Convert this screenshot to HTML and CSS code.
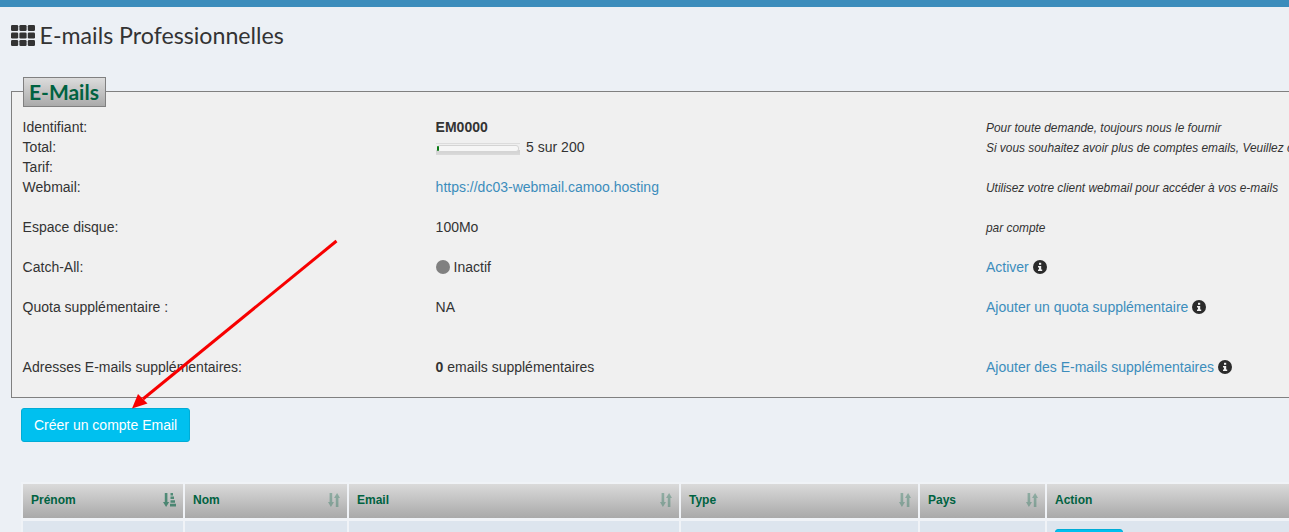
FILE: index.html
```html
<!DOCTYPE html>
<html>
<head>
    <title>E-mails Professionnelles</title>
    <meta name="viewport" content="width=device-width, initial-scale=1">
    <link rel="stylesheet" href="styles.css">
</head>
<body>
    <div class="top-bar"></div>

    <div class="page-title">
        <svg class="title-icon" width="24" height="21" viewBox="0 0 24 21">
            <rect x="0" y="0" width="7.200" height="6" rx="1.200"/>
            <rect x="8.400" y="0" width="7.200" height="6" rx="1.200"/>
            <rect x="16.800" y="0" width="7.200" height="6" rx="1.200"/>
            <rect x="0" y="7.500" width="7.200" height="6" rx="1.200"/>
            <rect x="8.400" y="7.500" width="7.200" height="6" rx="1.200"/>
            <rect x="16.800" y="7.500" width="7.200" height="6" rx="1.200"/>
            <rect x="0" y="15" width="7.200" height="6" rx="1.200"/>
            <rect x="8.400" y="15" width="7.200" height="6" rx="1.200"/>
            <rect x="16.800" y="15" width="7.200" height="6" rx="1.200"/>
        </svg>
        <h1>E-mails Professionnelles</h1>
    </div>

    <fieldset class="info-box">
        <legend>E-Mails</legend>
        <div class="info-grid">
            <div>Identifiant:</div>
            <div><b>EM0000</b></div>
            <div class="note">Pour toute demande, toujours nous le fournir</div>

            <div>Total:</div>
            <div class="usage">
                <span class="progress"><span class="progress-fill"></span></span>
                5 sur 200
            </div>
            <div class="note">Si vous souhaitez avoir plus de comptes emails, Veuillez contacter</div>

            <div>Tarif:</div>
            <div></div>
            <div></div>

            <div>Webmail:</div>
            <div><a href="#">https://dc03-webmail.camoo.hosting</a></div>
            <div class="note">Utilisez votre client webmail pour accéder à vos e-mails</div>

            <div class="gap-before">Espace disque:</div>
            <div class="gap-before">100Mo</div>
            <div class="gap-before note">par compte</div>

            <div class="gap-before">Catch-All:</div>
            <div class="gap-before status"><span class="dot"></span>Inactif</div>
            <div class="gap-before">
                <a href="#">Activer</a>
                <svg class="info-icon" width="14" height="14" viewBox="0 0 14 14"><circle cx="7" cy="7" r="7"/><rect class="info-mark" x="6" y="2.800" width="2.200" height="2"/><path class="info-mark" d="M5 6h3.200v3.600H9.200v1.400H5V9.600h1V7.400H5z"/></svg>
            </div>

            <div class="gap-before">Quota supplémentaire :</div>
            <div class="gap-before">NA</div>
            <div class="gap-before">
                <a href="#">Ajouter un quota supplémentaire</a>
                <svg class="info-icon" width="14" height="14" viewBox="0 0 14 14"><circle cx="7" cy="7" r="7"/><rect class="info-mark" x="6" y="2.800" width="2.200" height="2"/><path class="info-mark" d="M5 6h3.200v3.600H9.200v1.400H5V9.600h1V7.400H5z"/></svg>
            </div>

            <div class="gap-before-large">Adresses E-mails supplémentaires:</div>
            <div class="gap-before-large"><b>0</b> emails supplémentaires</div>
            <div class="gap-before-large">
                <a href="#">Ajouter des E-mails supplémentaires</a>
                <svg class="info-icon" width="14" height="14" viewBox="0 0 14 14"><circle cx="7" cy="7" r="7"/><rect class="info-mark" x="6" y="2.800" width="2.200" height="2"/><path class="info-mark" d="M5 6h3.200v3.600H9.200v1.400H5V9.600h1V7.400H5z"/></svg>
            </div>
        </div>
    </fieldset>

    <button class="btn-create">Créer un compte Email</button>

    <table class="mail-table">
        <colgroup>
            <col class="col-first">
            <col class="col-last">
            <col class="col-email">
            <col class="col-type">
            <col class="col-country">
            <col class="col-action">
        </colgroup>
        <thead>
            <tr>
                <th class="sorted">Prénom
                    <svg class="sort-icon" width="13" height="14" viewBox="0 0 13 14"><path d="M1.800 0h2.600v9h1.800L3.100 14 0 9h1.800z"/><path d="M7.500 0h2.500v2.500H7.500zM7.500 3.600h3.500v2.500H7.500zM7.500 7.200h4.500v2.500H7.500zM7 10.800h6v2.700H7z"/></svg>
                </th>
                <th>Nom
                    <svg class="sort-icon" width="12" height="14" viewBox="0 0 12 14"><path d="M1.600 0h2.600v9H6L2.900 14 0 9h1.600z"/><path d="M7.800 14h2.600V5H12L9.100 0 6 5h1.800z"/></svg>
                </th>
                <th>Email
                    <svg class="sort-icon" width="12" height="14" viewBox="0 0 12 14"><path d="M1.600 0h2.600v9H6L2.900 14 0 9h1.600z"/><path d="M7.800 14h2.600V5H12L9.100 0 6 5h1.800z"/></svg>
                </th>
                <th>Type
                    <svg class="sort-icon" width="12" height="14" viewBox="0 0 12 14"><path d="M1.600 0h2.600v9H6L2.900 14 0 9h1.600z"/><path d="M7.800 14h2.600V5H12L9.100 0 6 5h1.800z"/></svg>
                </th>
                <th>Pays
                    <svg class="sort-icon" width="12" height="14" viewBox="0 0 12 14"><path d="M1.600 0h2.600v9H6L2.900 14 0 9h1.600z"/><path d="M7.800 14h2.600V5H12L9.100 0 6 5h1.800z"/></svg>
                </th>
                <th>Action</th>
            </tr>
        </thead>
        <tbody>
            <tr>
                <td></td>
                <td></td>
                <td></td>
                <td></td>
                <td></td>
                <td><button class="btn-row"></button></td>
            </tr>
        </tbody>
    </table>

    <!-- annotation drawn over the page -->
    <svg class="annotation" width="1289" height="532" viewBox="0 0 1289 532">
        <line x1="336.500" y1="241" x2="143" y2="399" stroke="#f70000" stroke-width="3"/>
        <path d="M132 408.500 L138 394 L143.500 399.500 L147.500 403.500 Z" fill="#f70000"/>
    </svg>
</body>
</html>
```

FILE: styles.css
```css
html, body {
    height: 532px;
    overflow: hidden;
}
body {
    margin: 0;
    background-color: #ecf0f5;
    color: #333;
    font-family: "Liberation Sans", Arial, sans-serif;
    font-size: 14px;
    line-height: 20px;
    position: relative;
}
a {
    color: #3c8dbc;
    text-decoration: none;
}
.top-bar {
    height: 7px;
    background-color: #3c8dbc;
}
.page-title {
    display: flex;
    align-items: center;
    gap: 4.5px;
    padding: 14px 0 0 11px;
    height: 28px;
}
.title-icon {
    fill: #333;
}
.page-title h1 {
    margin: 0;
    font-family: Lato, sans-serif;
    font-size: 23.2px;
    font-weight: 400;
    line-height: 28px;
}
.info-box {
    width: 1500px;
    height: 322px;
    box-sizing: border-box;
    margin: 27px 0 0 11px;
    padding: 11px 11px 10px 10.6px;
    border: 1px solid #808080;
    background-color: #f0f0f0;
    min-inline-size: 0;
}
.info-box legend {
    position: relative;
    top: 1px;
    margin-left: 0.4px;
    padding: 0 6px 0 5px;
    height: 30px;
    box-sizing: border-box;
    border: 1px solid #808080;
    background: linear-gradient(#dcdcdc, #aaa);
    color: #006241;
    font-family: Lato, sans-serif;
    font-size: 21px;
    font-weight: 700;
    line-height: 28px;
}
.info-grid {
    display: grid;
    grid-template-columns: 413px 550.4px 1fr;
    grid-auto-rows: auto;
}
.note {
    font-size: 11.9px;
    font-style: italic;
    white-space: nowrap;
    padding-top: 1px;
    margin-bottom: -1px;
}
.gap-before {
    margin-top: 20px;
}
.gap-before-large {
    margin-top: 40px;
}
.usage {
    display: flex;
    align-items: center;
    gap: 6.5px;
}
.progress {
    display: block;
    width: 84px;
    height: 12px;
    margin-top: 4px;
    box-sizing: border-box;
    background: linear-gradient(#dcdcdc 0, #dcdcdc 1px, #efefef 1px, #efefef 7px, #d0d0d0 7px, #dadada);
    position: relative;
}
.progress::before {
    content: "";
    position: absolute;
    left: 1px;
    right: 1px;
    top: 2px;
    height: 7px;
    border: 1px solid #d4d4d4;
    border-radius: 3px;
    background-color: #f6f6f6;
    box-sizing: border-box;
}
.progress-fill {
    display: block;
    position: relative;
    top: 3px;
    width: 2px;
    height: 5px;
    margin: 0 0 0 1px;
    background-color: #0a7a14;
    border-radius: 1px;
}
.status {
    display: flex;
    align-items: center;
    gap: 4px;
}
.dot {
    width: 14px;
    height: 14px;
    border-radius: 50%;
    background-color: #808080;
}
.info-icon {
    fill: #2b2b2b;
    vertical-align: -2px;
}
.info-mark {
    fill: #f0f0f0;
}
.btn-create {
    display: block;
    margin: 10px 0 0 21px;
    padding: 6px 12px;
    height: 34px;
    border: 1px solid #00acd6;
    border-radius: 3px;
    background-color: #00c0ef;
    color: #fff;
    font-family: inherit;
    font-size: 14px;
    line-height: 20px;
}
.mail-table {
    table-layout: fixed;
    width: 1400px;
    margin: 40px 0 0 21px;
    border-collapse: separate;
    border-spacing: 2px;
    background-color: #f0f3f7;
}
.col-first { width: 160px; }
.col-last { width: 162px; }
.col-email { width: 330px; }
.col-type { width: 237px; }
.col-country { width: 125px; }
.mail-table th {
    height: 34px;
    box-sizing: border-box;
    padding: 0 8px 2px;
    position: relative;
    background: linear-gradient(#dadada, #a9a9a9);
    color: #006241;
    font-size: 12px;
    font-weight: 700;
    text-align: left;
}
.sort-icon {
    position: absolute;
    right: 7px;
    top: 9px;
    fill: #006241;
    opacity: 0.3;
}
.sorted .sort-icon {
    opacity: 0.6;
}
.mail-table td {
    height: 40px;
    padding: 8px;
    vertical-align: top;
    background-color: #dde5ee;
}
.mail-table tbody tr td {
    border-top: 1px solid #f0f3f7;
}
.btn-row {
    display: block;
    width: 68px;
    height: 34px;
    border: 1px solid #00acd6;
    border-radius: 3px;
    background-color: #00c0ef;
}
.annotation {
    position: absolute;
    left: 0;
    top: 0;
    pointer-events: none;
}
```
